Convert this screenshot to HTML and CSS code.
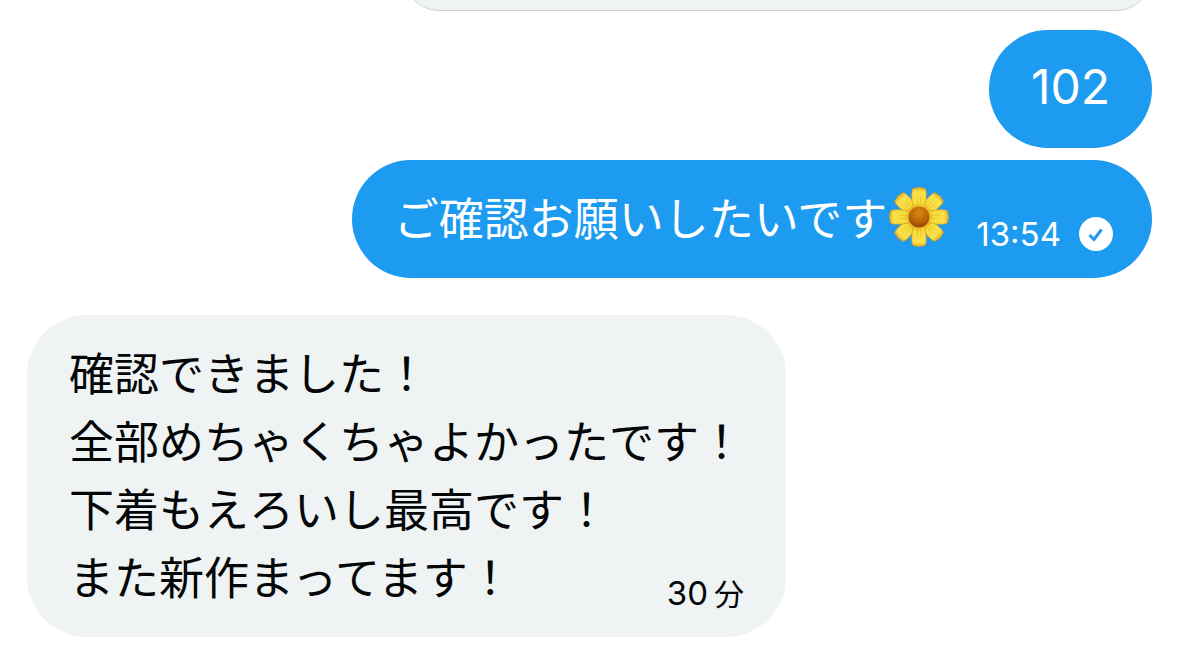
FILE: index.html
```
<!DOCTYPE html>
<html lang="ja">
<head>
  <meta charset="UTF-8">
  <meta name="viewport" content="width=device-width, initial-scale=1">
  <title>メッセージ</title>
  <link rel="stylesheet" href="styles.css">
</head>
<body>

  <main class="chat">
    <div class="card"></div>

    <div class="bubble sent">
      <p class="number">102</p>
    </div>

    <div class="bubble sent with-meta">
      <p>ご確認お願いしたいです</p>
      <svg class="flower" viewBox="0 0 60 60" role="img" aria-label="花">
        <defs>
          <radialGradient id="petal" gradientUnits="userSpaceOnUse" cx="30" cy="30" r="30">
            <stop offset="0.3" stop-color="#e9b418"/>
            <stop offset="0.5" stop-color="#f8dc3c"/>
            <stop offset="0.85" stop-color="#f9e04a"/>
            <stop offset="1" stop-color="#dda628"/>
          </radialGradient>
          <radialGradient id="core" cx="0.5" cy="0.3" r="0.7">
            <stop offset="0" stop-color="#d98a0c"/>
            <stop offset="0.6" stop-color="#bd6508"/>
            <stop offset="1" stop-color="#954304"/>
          </radialGradient>
          <g id="leaf">
            <path d="M26 26 C24 21 22 12 23 4 Q23 1 26 1 Q28 1 30 0 Q32 1 34 1 Q37 1 37 4 C38 12 36 21 34 26 Z" fill="url(#petal)" stroke="#cb9524" stroke-width="0.7"/>
            <path d="M28 10 L29 20 M32 10 L31 20" fill="none" stroke="#e3bb2a" stroke-width="0.7"/>
          </g>
        </defs>
        <use href="#leaf" transform="rotate(45 30 30)"/>
        <use href="#leaf" transform="rotate(135 30 30)"/>
        <use href="#leaf" transform="rotate(225 30 30)"/>
        <use href="#leaf" transform="rotate(315 30 30)"/>
        <use href="#leaf"/>
        <use href="#leaf" transform="rotate(90 30 30)"/>
        <use href="#leaf" transform="rotate(180 30 30)"/>
        <use href="#leaf" transform="rotate(270 30 30)"/>
        <circle cx="30" cy="30" r="10.5" fill="url(#core)"/>
      </svg>
      <div class="meta">
        <time class="time">13:54</time>
        <svg class="check" viewBox="0 0 34 34" role="img" aria-label="既読">
          <circle cx="17" cy="17" r="17" fill="#fff"/>
          <path d="M10.5 18 L15 22.5 L22.5 12.5" fill="none" stroke="#1d9bf0" stroke-width="3"/>
        </svg>
      </div>
    </div>

    <div class="bubble received">
      <p>確認できました！</p>
      <p>全部めちゃくちゃよかったです！</p>
      <p>下着もえろいし最高です！</p>
      <div class="last-line">
        <p>また新作まってます！</p>
        <time class="time">30<span class="unit">分</span></time>
      </div>
    </div>
  </main>

</body>
</html>
```
FILE: styles.css
```
* {
  box-sizing: border-box;
}
body {
  margin: 0;
  background: #fff;
  color: #050607;
  font-family: "Noto Sans CJK JP", sans-serif;
  font-size: 45px;
  line-height: 68px;
}
p {
  margin: 0;
}
/* newest message stays at the bottom, older ones run off the top */
.chat {
  height: 100vh;
  overflow: hidden;
  display: flex;
  flex-direction: column;
  justify-content: flex-end;
  padding: 0 27px 11px;
}
.card {
  flex: none;
  align-self: flex-end;
  width: calc(100% - 376px);
  height: 400px;
  margin-bottom: 19px;
  background: #eff3f4;
  border: 1px solid #cfd0da;
  border-radius: 36px;
}
.bubble {
  flex: none;
  padding: 23px 42px 27px;
  border-radius: 60px;
}
.sent {
  align-self: flex-end;
  background: #1d9bf0;
  color: #fff;
}
.sent + .sent {
  margin-top: 12px;
}
.received {
  align-self: flex-start;
  margin-top: 37px;
  background: #eff3f4;
}
.number {
  font-family: Inter, sans-serif;
  font-size: 48px;
}
.with-meta {
  display: flex;
  align-items: center;
  padding-right: 39px;
}
.flower {
  width: 60px;
  height: 60px;
  margin-left: 2px;
}
.meta {
  display: flex;
  align-self: flex-end;
  align-items: center;
  gap: 18px;
  margin-left: 27px;
}
.time {
  font-family: Inter, "Noto Sans CJK JP", sans-serif;
  font-size: 33px;
  line-height: 32px;
}
.check {
  width: 34px;
  height: 34px;
}
.last-line {
  display: flex;
  align-items: flex-end;
  justify-content: space-between;
}
.unit {
  margin-left: 6px;
  font-size: 30px;
}
```
